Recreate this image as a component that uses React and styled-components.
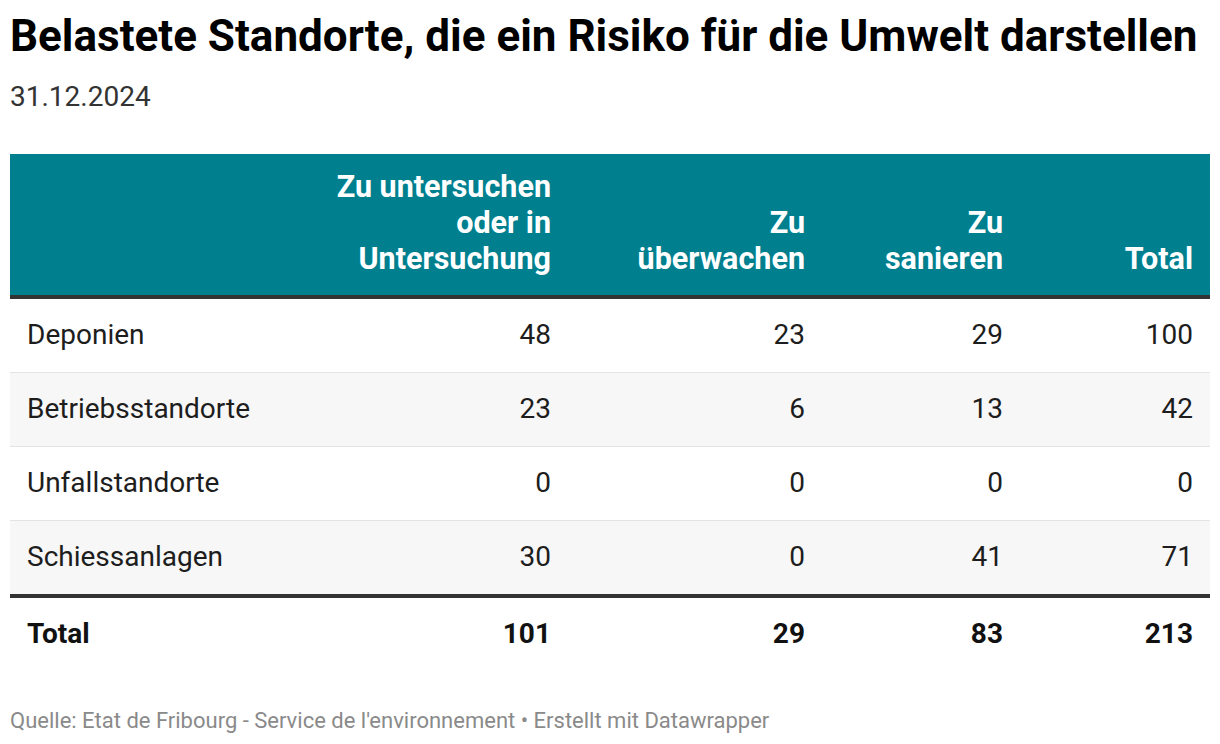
import React from "react";
import styled, { createGlobalStyle } from "styled-components";

const rows = [
  { label: "Deponien", values: [48, 23, 29, 100] },
  { label: "Betriebsstandorte", values: [23, 6, 13, 42] },
  { label: "Unfallstandorte", values: [0, 0, 0, 0] },
  { label: "Schiessanlagen", values: [30, 0, 41, 71] },
];

const totals = [101, 29, 83, 213];

const GlobalStyle = createGlobalStyle`
  body {
    margin: 0;
    background: #ffffff;
    font-family: Roboto, "Liberation Sans", sans-serif;
    color: #181818;
  }
`;

const Page = styled.div`
  padding: 10px 10px 0;
`;

const Title = styled.h1`
  margin: 0;
  font-size: 44px;
  line-height: 52px;
  font-weight: 700;
  color: #000;
`;

const Subtitle = styled.p`
  margin: 20px 0 0;
  font-size: 28px;
  line-height: 30px;
  color: #333;
`;

const Table = styled.div`
  margin-top: 42px;
  display: grid;
  grid-template-columns: 1fr 290px 254px 198px 190px;
`;

const HeadCell = styled.div`
  background: #00808f;
  color: #fff;
  font-weight: 700;
  font-size: 30.5px;
  line-height: 36px;
  text-align: right;
  padding: 15px 17px 18px 40px;
  height: 108px;
  display: flex;
  align-items: flex-end;
  justify-content: flex-end;
  border-bottom: 4px solid #333;
`;

const Cell = styled.div`
  font-size: 28px;
  line-height: 36px;
  padding: 18px 17px 19px 17px;
  text-align: ${(p) => (p.$label ? "left" : "right")};
  background: ${(p) => (p.$striped ? "#f7f7f7" : "#fff")};
  border-bottom: ${(p) => (p.$last ? "4px solid #333" : "1px solid #e3e3e3")};
  color: #1d1d1d;
`;

const TotalCell = styled.div`
  font-size: 28px;
  line-height: 36px;
  font-weight: 700;
  padding: 18px 17px 18px 17px;
  text-align: ${(p) => (p.$label ? "left" : "right")};
  color: #111;
`;

const Footer = styled.p`
  margin: 38px 0 0;
  font-size: 22px;
  line-height: 26px;
  color: #8a8a8a;
`;

const App = () => {
  return (
    <Page>
      <GlobalStyle />
      <Title>Belastete Standorte, die ein Risiko für die Umwelt darstellen</Title>
      <Subtitle>31.12.2024</Subtitle>
      <Table>
        <HeadCell />
        <HeadCell>Zu untersuchen oder in Untersuchung</HeadCell>
        <HeadCell>Zu überwachen</HeadCell>
        <HeadCell>Zu sanieren</HeadCell>
        <HeadCell>Total</HeadCell>
        {rows.map((row, i) => (
          <React.Fragment key={row.label}>
            <Cell $label $striped={i % 2 === 1} $last={i === rows.length - 1}>
              {row.label}
            </Cell>
            {row.values.map((v, j) => (
              <Cell key={j} $striped={i % 2 === 1} $last={i === rows.length - 1}>
                {v}
              </Cell>
            ))}
          </React.Fragment>
        ))}
        <TotalCell $label>Total</TotalCell>
        {totals.map((v, j) => (
          <TotalCell key={j}>{v}</TotalCell>
        ))}
      </Table>
      <Footer>
        Quelle: Etat de Fribourg - Service de l'environnement • Erstellt mit Datawrapper
      </Footer>
    </Page>
  );
};

export default App;
